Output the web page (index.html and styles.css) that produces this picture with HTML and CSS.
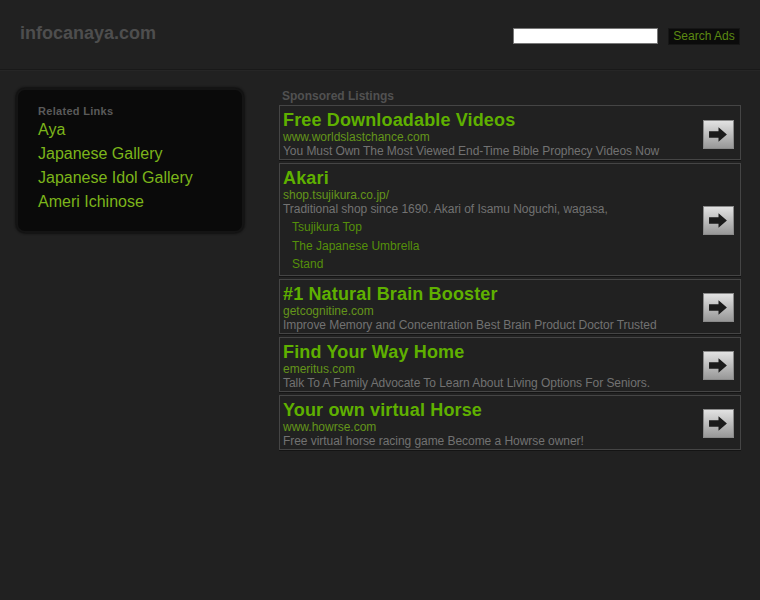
FILE: index.html
```html
<!DOCTYPE html>
<html>
<head>
<meta charset="utf-8">
<link rel="stylesheet" href="styles.css">
</head>
<body>
<div class="header">
  <div class="logo">infocanaya.com</div>
  <form class="search">
    <input class="search-input" type="text">
    <button class="search-btn" type="button">Search Ads</button>
  </form>
</div>
<div class="main">
  <div class="side">
    <div class="side-title">Related Links</div>
    <a class="side-link" href="#">Aya</a>
    <a class="side-link" href="#">Japanese Gallery</a>
    <a class="side-link" href="#">Japanese Idol Gallery</a>
    <a class="side-link" href="#">Ameri Ichinose</a>
  </div>
  <div class="listings">
    <div class="listings-title">Sponsored Listings</div>
    <div class="ad">
      <div class="ad-text">
        <div class="ad-title">Free Downloadable Videos</div>
        <div class="ad-url">www.worldslastchance.com</div>
        <div class="ad-desc">You Must Own The Most Viewed End-Time Bible Prophecy Videos Now</div>
      </div>
      <span class="go"><svg viewBox="0 0 20 16" width="21" height="17"><path d="M1 5h9V1l8 7-8 7v-4H1z" fill="#1b1b1b"/></svg></span>
    </div>
    <div class="ad">
      <div class="ad-text">
        <div class="ad-title">Akari</div>
        <div class="ad-url">shop.tsujikura.co.jp/</div>
        <div class="ad-desc">Traditional shop since 1690. Akari of Isamu Noguchi, wagasa,</div>
        <ul class="sublinks">
          <li><a href="#">Tsujikura Top</a></li>
          <li><a href="#">The Japanese Umbrella Stand</a></li>
        </ul>
      </div>
      <span class="go"><svg viewBox="0 0 20 16" width="21" height="17"><path d="M1 5h9V1l8 7-8 7v-4H1z" fill="#1b1b1b"/></svg></span>
    </div>
    <div class="ad">
      <div class="ad-text">
        <div class="ad-title">#1 Natural Brain Booster</div>
        <div class="ad-url">getcognitine.com</div>
        <div class="ad-desc">Improve Memory and Concentration Best Brain Product Doctor Trusted</div>
      </div>
      <span class="go"><svg viewBox="0 0 20 16" width="21" height="17"><path d="M1 5h9V1l8 7-8 7v-4H1z" fill="#1b1b1b"/></svg></span>
    </div>
    <div class="ad">
      <div class="ad-text">
        <div class="ad-title">Find Your Way Home</div>
        <div class="ad-url">emeritus.com</div>
        <div class="ad-desc">Talk To A Family Advocate To Learn About Living Options For Seniors.</div>
      </div>
      <span class="go"><svg viewBox="0 0 20 16" width="21" height="17"><path d="M1 5h9V1l8 7-8 7v-4H1z" fill="#1b1b1b"/></svg></span>
    </div>
    <div class="ad">
      <div class="ad-text">
        <div class="ad-title">Your own virtual Horse</div>
        <div class="ad-url">www.howrse.com</div>
        <div class="ad-desc">Free virtual horse racing game Become a Howrse owner!</div>
      </div>
      <span class="go"><svg viewBox="0 0 20 16" width="21" height="17"><path d="M1 5h9V1l8 7-8 7v-4H1z" fill="#1b1b1b"/></svg></span>
    </div>
  </div>
</div>
</body>
</html>
```
FILE: styles.css
```css
html, body {
  margin: 0;
  padding: 0;
  background: #212121;
  font-family: "Liberation Sans", Arial, sans-serif;
}
a { text-decoration: none; }

.header {
  height: 69px;
  border-bottom: 1px solid #191919;
  box-shadow: 0 1px 0 #262626;
  display: flex;
  justify-content: space-between;
  align-items: flex-start;
  padding: 0 20px 0 20px;
}
.logo {
  margin-top: 22px;
  font-size: 18px;
  font-weight: bold;
  color: #4e4e4e;
  line-height: 22px;
}
.search {
  margin: 28px 0 0 0;
  display: flex;
  align-items: flex-start;
}
.search-input {
  width: 145px;
  height: 16px;
  box-sizing: border-box;
  border: 1px solid #777;
  background: #fff;
  margin: 0 10px 0 0;
  padding: 0;
}
.search-btn {
  height: 17px;
  width: 72px;
  padding: 0;
  margin: 0;
  border: 1px solid #161616;
  background: #0b0b0b;
  color: #5b8a12;
  font-family: "Liberation Sans", Arial, sans-serif;
  font-size: 12px;
  line-height: 15px;
}

.main {
  display: flex;
  align-items: flex-start;
  padding: 17px 0 0 16px;
}
.side {
  width: 228px;
  height: 145px;
  box-sizing: border-box;
  margin-top: 1px;
  background: #0a0a0a;
  border: 2px solid #141414;
  border-radius: 9px;
  box-shadow: 0 0 2px 1px #111;
  padding: 15px 0 0 20px;
  display: flex;
  flex-direction: column;
}
.side-title {
  font-size: 11px;
  font-weight: bold;
  color: #5a5a5a;
  line-height: 13px;
  letter-spacing: 0.3px;
}
.side-link {
  font-size: 16px;
  line-height: 24px;
  color: #7cb51a;
}

.listings {
  margin-left: 35px;
  width: 462px;
}
.listings-title {
  font-size: 12px;
  font-weight: bold;
  color: #515151;
  line-height: 14px;
  padding: 2px 0 0 3px;
  margin-bottom: 2px;
}
.ad {
  border: 1px solid #454545;
  display: flex;
  align-items: center;
  justify-content: space-between;
  margin-bottom: 3px;
  padding: 4px 6px 1px 3px;
  box-shadow: 0 1px 0 #141414;
}
.ad-text { flex: 1; }
.ad-title {
  font-size: 18px;
  font-weight: bold;
  color: #5fb000;
  line-height: 20px;
  letter-spacing: 0.15px;
}
.ad-url {
  font-size: 12px;
  color: #64951a;
  line-height: 14px;
}
.ad-desc {
  font-size: 12px;
  color: #727272;
  line-height: 14px;
  letter-spacing: -0.05px;
}
.sublinks {
  list-style: none;
  margin: 2px 0 0 0;
  padding: 0 0 0 9px;
  width: 135px;
}
.sublinks li {
  font-size: 12px;
  line-height: 18.5px;
}
.sublinks a { color: #55900a; }
.go {
  width: 29px;
  height: 27px;
  border: 1px solid #8a8a8a;
  background: linear-gradient(#e2e2e2, #989898);
  display: flex;
  align-items: center;
  justify-content: center;
  flex: none;
}
```
